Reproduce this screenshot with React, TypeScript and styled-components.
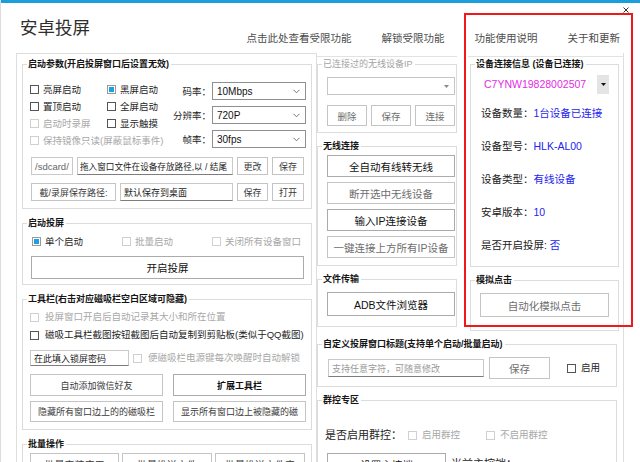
import React from "react";
import styled, { createGlobalStyle } from "styled-components";

const FONT = `"Liberation Sans", "Noto Sans CJK SC", "Noto Sans CJK JP", sans-serif`;

const Global = createGlobalStyle`
  html, body { margin: 0; padding: 0; background: #fff; }
  body { width: 640px; height: 462px; overflow: hidden; font-family: ${FONT}; color: #222; }
  * { box-sizing: border-box; }
`;

const Root = styled.div`
  position: relative;
  width: 640px;
  height: 462px;
  overflow: hidden;
  background: #fff;
  border-left: 1px solid #dcdcdc;
  display: flex;
  flex-direction: column;
`;

const TopStrip = styled.div`
  flex: none;
  height: 3px;
  background: #1a9fdb;
`;

const Header = styled.header`
  flex: none;
  height: 50px;
  display: flex;
  align-items: flex-start;
  padding: 0 20px 0 19px;
`;

const AppTitle = styled.h1`
  margin: 14px 0 0;
  font-size: 17.5px;
  line-height: 22px;
  font-weight: 400;
  color: #2e2e2e;
`;

const HeaderLinks = styled.nav`
  margin: 28px 0 0 auto;
  display: flex;
  gap: 30px;
`;

const HeaderLink = styled.span`
  font-size: 10.5px;
  line-height: 14px;
  color: #4d4d4d;
  white-space: nowrap;
`;

const WinButtons = styled.svg`
  position: absolute;
  left: 602px;
  top: 5px;
`;

const Body = styled.main`
  flex: 1;
  min-height: 0;
  display: flex;
  align-items: stretch;
  padding-left: 15px;
`;

const LeftPanel = styled.section`
  flex: none;
  width: 301px;
  border: 1px solid #dedede;
  border-bottom: none;
  padding: 3px 4px 0 5px;
  display: flex;
  flex-direction: column;
  gap: 7px;
  overflow: hidden;
`;

const RightArea = styled.section`
  flex: none;
  width: 307px;
  border-right: 1px solid #dedede;
  padding-top: 3px;
  display: flex;
  flex-direction: column;
  gap: 6px;
  overflow: hidden;
`;

const TopCols = styled.div`
  display: flex;
  align-items: flex-start;
  gap: 11px;
`;

const Column = styled.div<{ $w: number; $pl?: number; $pr?: number }>`
  flex: none;
  width: ${(p) => p.$w}px;
  border-top: 1px solid #e2e2e2;
  padding: 0 ${(p) => p.$pr ?? 0}px 0 ${(p) => p.$pl ?? 0}px;
  display: flex;
  flex-direction: column;
  gap: 6px;
`;

const Group = styled.fieldset<{ $w?: number }>`
  margin: 0;
  padding: 0;
  min-width: 0;
  border: 1px solid #dcdcdc;
  ${(p) => (p.$w ? `width: ${p.$w}px; flex: none;` : "")}
`;

const Legend = styled.legend<{ $muted?: boolean }>`
  margin-left: 4px;
  padding: 0 2px 0 1px;
  font-size: 9px;
  line-height: 14px;
  font-weight: ${(p) => (p.$muted ? 400 : 700)};
  color: ${(p) => (p.$muted ? "#a3a3a3" : "#151515")};
  white-space: nowrap;
`;

const GroupBody = styled.div<{ $p: string; $gap?: number }>`
  padding: ${(p) => p.$p};
  display: flex;
  flex-direction: column;
  gap: ${(p) => p.$gap ?? 0}px;
`;

const Options = styled.div`
  display: flex;
  justify-content: space-between;
`;

const CheckGrid = styled.div<{ $cols: string; $row: number; $pl?: number }>`
  display: grid;
  grid-template-columns: ${(p) => p.$cols};
  grid-auto-rows: ${(p) => p.$row}px;
  align-items: center;
  padding-left: ${(p) => p.$pl ?? 0}px;
`;

const CheckItem = styled.label<{ $disabled?: boolean; $gap?: number; $span?: number; $w?: number; $size?: number }>`
  display: flex;
  align-items: center;
  gap: ${(p) => p.$gap ?? 4}px;
  font-size: ${(p) => p.$size ?? 9.5}px;
  line-height: 14px;
  color: ${(p) => (p.$disabled ? "#a8a8a8" : "#1e1e1e")};
  white-space: nowrap;
  ${(p) => (p.$span ? `grid-column: span ${p.$span};` : "")}
  ${(p) => (p.$w ? `width: ${p.$w}px; flex: none;` : "")}
`;

const Box = styled.span<{ $checked?: boolean; $disabled?: boolean }>`
  flex: none;
  width: 9px;
  height: 9px;
  border: 1px solid ${(p) => (p.$disabled ? "#d0d0d0" : p.$checked ? "#9a9a9a" : "#555")};
  background: ${(p) => (p.$checked ? "#1ba1e2" : "#fff")};
  box-shadow: ${(p) => (p.$checked ? "inset 0 0 0 1px #fff" : "none")};
`;

const Check = ({
  label,
  checked,
  disabled,
  gap,
  span,
  w,
  size,
}: {
  label: string;
  checked?: boolean;
  disabled?: boolean;
  gap?: number;
  span?: number;
  w?: number;
  size?: number;
}) => (
  <CheckItem $disabled={disabled} $gap={gap} $span={span} $w={w} $size={size}>
    <Box $checked={checked} $disabled={disabled} />
    {label}
  </CheckItem>
);

const ComboCol = styled.div`
  display: flex;
  flex-direction: column;
  align-items: flex-end;
  gap: 6px;
  padding-top: 1px;
`;

const ComboRow = styled.div`
  display: flex;
  align-items: center;
  gap: 1px;
  font-size: 9.5px;
  color: #1e1e1e;
  white-space: nowrap;
`;

const Combo = styled.div<{ $w: number; $light?: boolean }>`
  width: ${(p) => p.$w}px;
  height: 18px;
  border: 1px solid ${(p) => (p.$light ? "#c6c6c6" : "#8f8f8f")};
  background: #fff;
  display: flex;
  align-items: center;
  justify-content: space-between;
  padding: 0 5px 0 4px;
  font-size: 10px;
  color: #111;
`;

const Chevron = () => (
  <svg width="7" height="5" viewBox="0 0 7 5">
    <polyline points="0.5,0.8 3.5,3.8 6.5,0.8" fill="none" stroke="#666" strokeWidth="0.9" />
  </svg>
);

const SmallTri = ({ color }: { color: string }) => (
  <svg width="5" height="3" viewBox="0 0 5 3">
    <polygon points="0,0 5,0 2.5,3" fill={color} />
  </svg>
);

const FieldRow = styled.div<{ $mt?: number; $gap: number; $pl?: number; $h?: number }>`
  display: flex;
  align-items: center;
  gap: ${(p) => p.$gap}px;
  margin-top: ${(p) => p.$mt ?? 0}px;
  padding-left: ${(p) => p.$pl ?? 0}px;
  ${(p) => (p.$h ? `height: ${p.$h}px;` : "")}
`;

const TextField = styled.div<{ $w: number; $h?: number; $tone?: "muted" | "hint" | "normal"; $size?: number; $px?: number }>`
  flex: none;
  width: ${(p) => p.$w}px;
  height: ${(p) => p.$h ?? 18}px;
  border: 1px solid #c9c9c9;
  border-bottom-color: ${(p) => (p.$tone === "muted" ? "#c9c9c9" : "#7d7d7d")};
  background: #fff;
  display: flex;
  align-items: center;
  padding: 0 ${(p) => p.$px ?? 3}px;
  overflow: hidden;
  white-space: nowrap;
  font-size: ${(p) => p.$size ?? 9}px;
  color: ${(p) => (p.$tone === "muted" ? "#666" : p.$tone === "hint" ? "#9a9a9a" : "#222")};
`;

const Btn = styled.button<{ $w?: number; $h: number; $size?: number; $tone?: "dark" | "normal" | "muted"; $bold?: boolean }>`
  appearance: none;
  flex: none;
  margin: 0;
  padding: 0;
  ${(p) => (p.$w ? `width: ${p.$w}px;` : "")}
  height: ${(p) => p.$h}px;
  border: 1px solid ${(p) => (p.$tone === "dark" ? "#ababab" : "#c4c4c4")};
  background: #fff;
  font-family: ${FONT};
  font-size: ${(p) => p.$size ?? 9}px;
  font-weight: ${(p) => (p.$bold ? 700 : 400)};
  color: ${(p) => (p.$tone === "muted" ? "#6e6e6e" : p.$tone === "dark" ? "#111" : "#3a3a3a")};
  white-space: nowrap;
  overflow: hidden;
  display: flex;
  align-items: center;
  justify-content: center;
`;

const BtnGrid = styled.div<{ $cols: string; $gap: number; $rowGap?: number; $mt?: number }>`
  display: grid;
  grid-template-columns: ${(p) => p.$cols};
  column-gap: ${(p) => p.$gap}px;
  row-gap: ${(p) => p.$rowGap ?? 0}px;
  margin-top: ${(p) => p.$mt ?? 0}px;
`;

const BtnStack = styled.div<{ $gap: number }>`
  display: flex;
  flex-direction: column;
  gap: ${(p) => p.$gap}px;
`;

const IdRow = styled.div`
  margin-top: 3px;
  height: 20px;
  display: flex;
  align-items: center;
  justify-content: space-between;
  padding: 0 9px 0 13px;
`;

const DeviceId = styled.span`
  font-size: 10.5px;
  color: #e52ae5;
`;

const DropBtn = styled.span`
  width: 12px;
  height: 19px;
  background: #e4e4e4;
  display: flex;
  align-items: center;
  justify-content: center;
`;

const InfoList = styled.dl`
  margin: 12px 0 0;
  padding-left: 10px;
  display: flex;
  flex-direction: column;
  gap: 19px;
`;

const InfoRow = styled.div`
  display: flex;
  font-size: 10.5px;
  line-height: 14px;
  white-space: nowrap;
`;

const InfoLabel = styled.dt`
  color: #222;
`;

const InfoValue = styled.dd`
  margin: 0;
  color: #2424ee;
`;

const BigLabel = styled.span<{ $w?: number }>`
  flex: none;
  font-size: 11px;
  line-height: 14px;
  color: #1e1e1e;
  white-space: nowrap;
  ${(p) => (p.$w ? `width: ${p.$w}px;` : "")}
`;

const Annotation = styled.div`
  position: absolute;
  left: 463px;
  top: 13px;
  width: 169px;
  height: 314px;
  border: 2px solid #f01818;
  pointer-events: none;
`;

export default function App() {
  return (
    <>
      <Global />
      <Root>
        <TopStrip />
        <Header>
          <AppTitle>安卓投屏</AppTitle>
          <HeaderLinks>
            <HeaderLink>点击此处查看受限功能</HeaderLink>
            <HeaderLink>解锁受限功能</HeaderLink>
            <HeaderLink>功能使用说明</HeaderLink>
            <HeaderLink>关于和更新</HeaderLink>
          </HeaderLinks>
        </Header>
        <WinButtons width="30" height="12" viewBox="0 0 30 12">
          <line x1="2" y1="9.5" x2="9" y2="9.5" stroke="#333" strokeWidth="1" />
          <line x1="20.5" y1="2.5" x2="25.5" y2="7.5" stroke="#333" strokeWidth="1" />
          <line x1="25.5" y1="2.5" x2="20.5" y2="7.5" stroke="#333" strokeWidth="1" />
        </WinButtons>
        <Body>
          <LeftPanel>
            <Group>
              <Legend>启动参数(开启投屏窗口后设置无效)</Legend>
              <GroupBody $p="10px 5px 7px 7px">
                <Options>
                  <CheckGrid $cols="77px auto" $row={17}>
                    <Check label="亮屏启动" />
                    <Check label="黑屏启动" checked />
                    <Check label="置顶启动" />
                    <Check label="全屏启动" />
                    <Check label="启动时录屏" disabled />
                    <Check label="显示触摸" />
                    <Check label="保持镜像只读(屏蔽鼠标事件)" disabled span={2} />
                  </CheckGrid>
                  <ComboCol>
                    <ComboRow>
                      码率：
                      <Combo $w={94}>
                        10Mbps
                        <Chevron />
                      </Combo>
                    </ComboRow>
                    <ComboRow>
                      分辨率：
                      <Combo $w={94}>
                        720P
                        <Chevron />
                      </Combo>
                    </ComboRow>
                    <ComboRow>
                      帧率：
                      <Combo $w={94}>
                        30fps
                        <Chevron />
                      </Combo>
                    </ComboRow>
                  </ComboCol>
                </Options>
                <FieldRow $mt={8} $gap={4} $pl={1}>
                  <TextField $w={42} $tone="muted" $size={9.5}>
                    /sdcard/
                  </TextField>
                  <TextField $w={156} $size={8.6} $px={2}>
                    拖入窗口文件在设备存放路径,以 / 结尾
                  </TextField>
                  <Btn $w={31} $h={18}>
                    更改
                  </Btn>
                  <Btn $w={32} $h={18}>
                    保存
                  </Btn>
                </FieldRow>
                <FieldRow $mt={8} $gap={4} $pl={1}>
                  <Btn $w={85} $h={18}>
                    截/录屏保存路径:
                  </Btn>
                  <TextField $w={113}>默认保存到桌面</TextField>
                  <Btn $w={31} $h={18}>
                    保存
                  </Btn>
                  <Btn $w={32} $h={18}>
                    打开
                  </Btn>
                </FieldRow>
              </GroupBody>
            </Group>

            <Group>
              <Legend>启动投屏</Legend>
              <GroupBody $p="3px 7px 5px 8px" $gap={6}>
                <CheckGrid $cols="90px 90px auto" $row={17} $pl={1}>
                  <Check label="单个启动" checked />
                  <Check label="批量启动" disabled />
                  <Check label="关闭所有设备窗口" disabled />
                </CheckGrid>
                <Btn $w={273} $h={23} $size={10.5} $tone="dark">
                  开启投屏
                </Btn>
              </GroupBody>
            </Group>

            <Group>
              <Legend>工具栏(右击对应磁吸栏空白区域可隐藏)</Legend>
              <GroupBody $p="2px 5px 7px 7px">
                <CheckGrid $cols="auto" $row={18}>
                  <Check label="投屏窗口开启后自动记录其大小和所在位置" disabled gap={6} />
                  <Check label="磁吸工具栏截图按钮截图后自动复制到剪贴板(类似于QQ截图)" gap={6} />
                </CheckGrid>
                <FieldRow $mt={6} $gap={4}>
                  <TextField $w={99} $h={16}>
                    在此填入锁屏密码
                  </TextField>
                  <Check label="便磁吸栏电源键每次唤醒时自动解锁" disabled gap={6} />
                </FieldRow>
                <BtnGrid $cols="133px 133px" $gap={10} $rowGap={5} $mt={8}>
                  <Btn $h={22}>自动添加微信好友</Btn>
                  <Btn $h={22} $bold $tone="dark">
                    扩展工具栏
                  </Btn>
                  <Btn $h={21}>隐藏所有窗口边上的的磁吸栏</Btn>
                  <Btn $h={21}>显示所有窗口边上被隐藏的磁</Btn>
                </BtnGrid>
              </GroupBody>
            </Group>

            <Group>
              <Legend>批量操作</Legend>
              <GroupBody $p="2px 5px 7px 7px">
                <BtnGrid $cols="89px 90px 90px" $gap={3}>
                  <Btn $h={22} $size={10}>批量安装应用</Btn>
                  <Btn $h={22} $size={10}>批量推送文件</Btn>
                  <Btn $h={22} $size={10}>批量推送文件夹</Btn>
                </BtnGrid>
              </GroupBody>
            </Group>
          </LeftPanel>

          <RightArea>
            <TopCols>
              <Column $w={140}>
                <Group>
                  <Legend $muted>已连接过的无线设备IP</Legend>
                  <GroupBody $p="6px 0 6px 9px">
                    <Combo $w={128} $light>
                      <span />
                      <SmallTri color="#888" />
                    </Combo>
                    <FieldRow $mt={10} $gap={4}>
                      <Btn $w={40} $h={21} $size={9.5} $tone="muted">
                        删除
                      </Btn>
                      <Btn $w={40} $h={21} $size={9.5} $tone="muted">
                        保存
                      </Btn>
                      <Btn $w={40} $h={21} $size={9.5} $tone="muted">
                        连接
                      </Btn>
                    </FieldRow>
                  </GroupBody>
                </Group>

                <Group>
                  <Legend>无线连接</Legend>
                  <GroupBody $p="2px 0 7px 9px">
                    <BtnStack $gap={5}>
                      <Btn $w={128} $h={22} $size={10.5} $tone="dark">
                        全自动有线转无线
                      </Btn>
                      <Btn $w={128} $h={22} $size={10.5} $tone="muted">
                        断开选中无线设备
                      </Btn>
                      <Btn $w={128} $h={22} $size={10.5} $tone="dark">
                        输入IP连接设备
                      </Btn>
                      <Btn $w={128} $h={22} $size={10.5} $tone="muted">
                        一键连接上方所有IP设备
                      </Btn>
                    </BtnStack>
                  </GroupBody>
                </Group>

                <Group>
                  <Legend>文件传输</Legend>
                  <GroupBody $p="6px 0 10px 9px">
                    <Btn $w={128} $h={24} $size={10.5} $tone="dark">
                      ADB文件浏览器
                    </Btn>
                  </GroupBody>
                </Group>
              </Column>

              <Column $w={155} $pl={2} $pr={4}>
                <Group>
                  <Legend>设备连接信息 (设备已连接)</Legend>
                  <GroupBody $p="0 0 14px 0">
                    <IdRow>
                      <DeviceId>C7YNW19828002507</DeviceId>
                      <DropBtn>
                        <SmallTri color="#111" />
                      </DropBtn>
                    </IdRow>
                    <InfoList>
                      <InfoRow>
                        <InfoLabel>设备数量：</InfoLabel>
                        <InfoValue>1台设备已连接</InfoValue>
                      </InfoRow>
                      <InfoRow>
                        <InfoLabel>设备型号：</InfoLabel>
                        <InfoValue>HLK-AL00</InfoValue>
                      </InfoRow>
                      <InfoRow>
                        <InfoLabel>设备类型：</InfoLabel>
                        <InfoValue>有线设备</InfoValue>
                      </InfoRow>
                      <InfoRow>
                        <InfoLabel>安卓版本：</InfoLabel>
                        <InfoValue>10</InfoValue>
                      </InfoRow>
                      <InfoRow>
                        <InfoLabel>是否开启投屏:</InfoLabel>
                        <InfoValue>&nbsp;否</InfoValue>
                      </InfoRow>
                    </InfoList>
                  </GroupBody>
                </Group>

                <Group>
                  <Legend>模拟点击</Legend>
                  <GroupBody $p="6px 0 13px 9px">
                    <Btn $w={129} $h={24} $size={10.5} $tone="muted">
                      自动化模拟点击
                    </Btn>
                  </GroupBody>
                </Group>
              </Column>
            </TopCols>

            <Group $w={300}>
              <Legend>自定义投屏窗口标题(支持单个启动/批量启动)</Legend>
              <GroupBody $p="6px 0 7px 10px">
                <FieldRow $gap={5} $h={22}>
                  <TextField $w={156} $tone="hint">
                    支持任意字符，可随意修改
                  </TextField>
                  <Btn $w={61} $h={22} $size={10.5} $tone="muted">
                    保存
                  </Btn>
                  <FieldRow $gap={0} $pl={12}>
                    <Check label="启用" gap={5} />
                  </FieldRow>
                </FieldRow>
              </GroupBody>
            </Group>

            <Group $w={300}>
              <Legend>群控专区</Legend>
              <GroupBody $p="21px 0 0 7px">
                <FieldRow $gap={0}>
                  <BigLabel $w={83}>是否启用群控：</BigLabel>
                  <Check label="启用群控" disabled w={78} gap={5} />
                  <Check label="不启用群控" disabled gap={5} />
                </FieldRow>
                <FieldRow $mt={11} $gap={5} $pl={2}>
                  <Btn $w={119} $h={22} $size={10.5} $tone="dark">
                    设置主控端
                  </Btn>
                  <BigLabel>当前主控端：</BigLabel>
                </FieldRow>
              </GroupBody>
            </Group>
          </RightArea>
        </Body>
        <Annotation />
      </Root>
    </>
  );
}
